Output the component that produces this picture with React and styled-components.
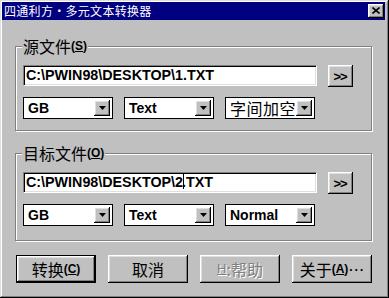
import React from 'react';
import styled, {createGlobalStyle, css} from 'styled-components';

const GlobalStyle = createGlobalStyle`
  html, body {
    margin: 0;
    padding: 0;
    background: #c0c0c0;
  }
  body {
    font-family: "Noto Sans CJK SC", "Liberation Sans", sans-serif;
  }
`;

const raised = css`
  box-shadow: inset -1px -1px 0 #000, inset 1px 1px 0 #fff,
    inset -2px -2px 0 #808080, inset 2px 2px 0 #dfdfdf;
`;

const Window = styled.div`
  width: 389px;
  height: 298px;
  box-sizing: border-box;
  padding: 2px 4px 2px 2px;
  background: #c0c0c0;
  box-shadow: inset -1px -1px 0 #000, inset 1px 1px 0 #dfdfdf,
    inset -2px -2px 0 #808080, inset 2px 2px 0 #fff;
  display: flex;
  flex-direction: column;
`;

const TitleBar = styled.div`
  height: 18px;
  background: #000080;
  display: flex;
  align-items: center;
  justify-content: space-between;
  padding: 0 1px 0 2px;
`;

const Title = styled.span`
  color: #fff;
  font-size: 12px;
  line-height: 18px;
  letter-spacing: 0.3px;
  white-space: nowrap;
`;

const CloseButton = styled.div`
  width: 16px;
  height: 14px;
  background: #c0c0c0;
  ${raised};
  display: flex;
  align-items: center;
  justify-content: center;
  padding-bottom: 1px;
  box-sizing: border-box;
`;

const Body = styled.div`
  padding: 18px 13px 0 13px;
`;

const Group = styled.fieldset`
  margin: ${p => p.$first ? '0' : '14px 0 0 0'};
  padding: 11px 0 ${p => p.$first ? 11 : 14}px 7px;
  border: 1px solid #808080;
  box-shadow: inset 1px 1px 0 #fff, 1px 1px 0 #fff;
  min-width: 0;
  display: flex;
  flex-direction: column;
  gap: 10px;
`;

const Legend = styled.legend`
  margin-left: -1px;
  padding: 0 1px;
  height: 16px;
  display: flex;
  align-items: center;
  background: #c0c0c0;
  font-size: 16px;
  line-height: 16px;
  color: #000;
  white-space: nowrap;
`;

const Accel = styled.span`
  font-family: "Liberation Sans", sans-serif;
  font-weight: bold;
  font-size: 12px;
  line-height: 12px;
  u {
    text-decoration: underline;
    text-underline-offset: 1px;
  }
`;

const Row = styled.div`
  display: flex;
  align-items: flex-start;
  gap: 11px;
`;

const PathField = styled.div`
  width: 294px;
  height: 21px;
  box-sizing: border-box;
  background: #fff;
  border-top: 1px solid #808080;
  border-left: 1px solid #808080;
  border-right: 1px solid #fff;
  border-bottom: 1px solid #fff;
  box-shadow: inset 1px 1px 0 #000, inset -1px -1px 0 #dfdfdf;
  padding: 0 2px;
  font-family: "Liberation Sans", sans-serif;
  font-weight: bold;
  font-size: 14.3px;
  line-height: 19px;
  white-space: nowrap;
  overflow: hidden;
`;

const Caret = styled.span`
  display: inline-block;
  width: 1px;
  height: 15px;
  background: #000;
  vertical-align: -2px;
  margin-right: -2px;
`;

const SmallButton = styled.div`
  width: 25px;
  height: 22px;
  box-sizing: border-box;
  ${raised};
  display: flex;
  align-items: center;
  justify-content: center;
  font-family: "Liberation Sans", sans-serif;
  font-weight: bold;
  font-size: 13px;
  letter-spacing: -1px;
  padding-right: 1px;
`;

const Combo = styled.div`
  width: 90px;
  height: 22px;
  box-sizing: border-box;
  border: 1px solid #000;
  background: #fff;
  display: flex;
  align-items: center;
  justify-content: space-between;
  padding: 2px;
`;

const ComboText = styled.span`
  padding-left: 2px;
  font-family: ${p => p.$cjk ? '"Noto Sans CJK SC", sans-serif' : '"Liberation Sans", sans-serif'};
  font-weight: ${p => p.$cjk ? 'normal' : 'bold'};
  font-size: ${p => p.$cjk ? '16px' : '14px'};
  line-height: 16px;
  letter-spacing: ${p => p.$cjk ? '0.5px' : '0'};
  white-space: nowrap;
`;

const ArrowButton = styled.div`
  width: 16px;
  height: 16px;
  flex: none;
  box-sizing: border-box;
  background: #c0c0c0;
  ${raised};
  display: flex;
  align-items: center;
  justify-content: center;
`;

const ButtonRow = styled.div`
  display: flex;
  gap: 12px;
  margin-top: 14px;
  padding-left: 1px;
`;

const Button = styled.div`
  width: 80px;
  height: 28px;
  box-sizing: border-box;
  background: #c0c0c0;
  display: flex;
  align-items: center;
  justify-content: center;
  font-size: 16px;
  line-height: 16px;
  white-space: nowrap;
  color: ${p => p.$disabled ? '#808080' : '#000'};
  text-shadow: ${p => p.$disabled ? '1px 1px 0 #fff' : 'none'};
  ${p => p.$default
    ? css`
      border: 1px solid #000;
      box-shadow: inset -1px -1px 0 #000, inset 1px 1px 0 #fff,
        inset -2px -2px 0 #808080, inset 2px 2px 0 #dfdfdf;
    `
    : raised};
`;

const HotKey = styled.span`
  font-family: "Liberation Sans", sans-serif;
  font-size: 13px;
  text-decoration: underline;
`;

function Arrow() {
    return <svg width="7" height="4" viewBox="0 0 7 4">
        <polygon points="0,0 7,0 3.5,4" fill="#000"/>
    </svg>;
}

function Dropdown({value, cjk}) {
    return <Combo>
        <ComboText $cjk={cjk}>{value}</ComboText>
        <ArrowButton><Arrow/></ArrowButton>
    </Combo>;
}

function FileGroup({first, label, hotkey, path, caret, style}) {
    return <Group $first={first}>
        <Legend>{label}<Accel>(<u>{hotkey}</u>)</Accel></Legend>
        <Row>
            <PathField>
                {caret ? <>{path}<Caret/>.TXT</> : path}
            </PathField>
            <SmallButton>&gt;&gt;</SmallButton>
        </Row>
        <Row>
            <Dropdown value="GB"/>
            <Dropdown value="Text"/>
            <Dropdown value={style} cjk={style === '字间加空'}/>
        </Row>
    </Group>;
}

export default function App() {
    return <>
        <GlobalStyle/>
        <Window>
            <TitleBar>
                <Title>四通利方•多元文本转换器</Title>
                <CloseButton>
                    <svg width="8" height="7" viewBox="0 0 8 7">
                        <path d="M0.5 0.5 L7.5 6.5 M7.5 0.5 L0.5 6.5" stroke="#000" strokeWidth="1.6"/>
                    </svg>
                </CloseButton>
            </TitleBar>
            <Body>
                <FileGroup first label="源文件" hotkey="S"
                           path="C:\PWIN98\DESKTOP\1.TXT" style="字间加空"/>
                <FileGroup label="目标文件" hotkey="O"
                           path="C:\PWIN98\DESKTOP\2" caret style="Normal"/>
                <ButtonRow>
                    <Button $default>转换<Accel>(<u>C</u>)</Accel></Button>
                    <Button>取消</Button>
                    <Button $disabled><HotKey>H</HotKey>:帮助</Button>
                    <Button>关于<Accel>(<u>A</u>)</Accel>⋯</Button>
                </ButtonRow>
            </Body>
        </Window>
    </>;
}
